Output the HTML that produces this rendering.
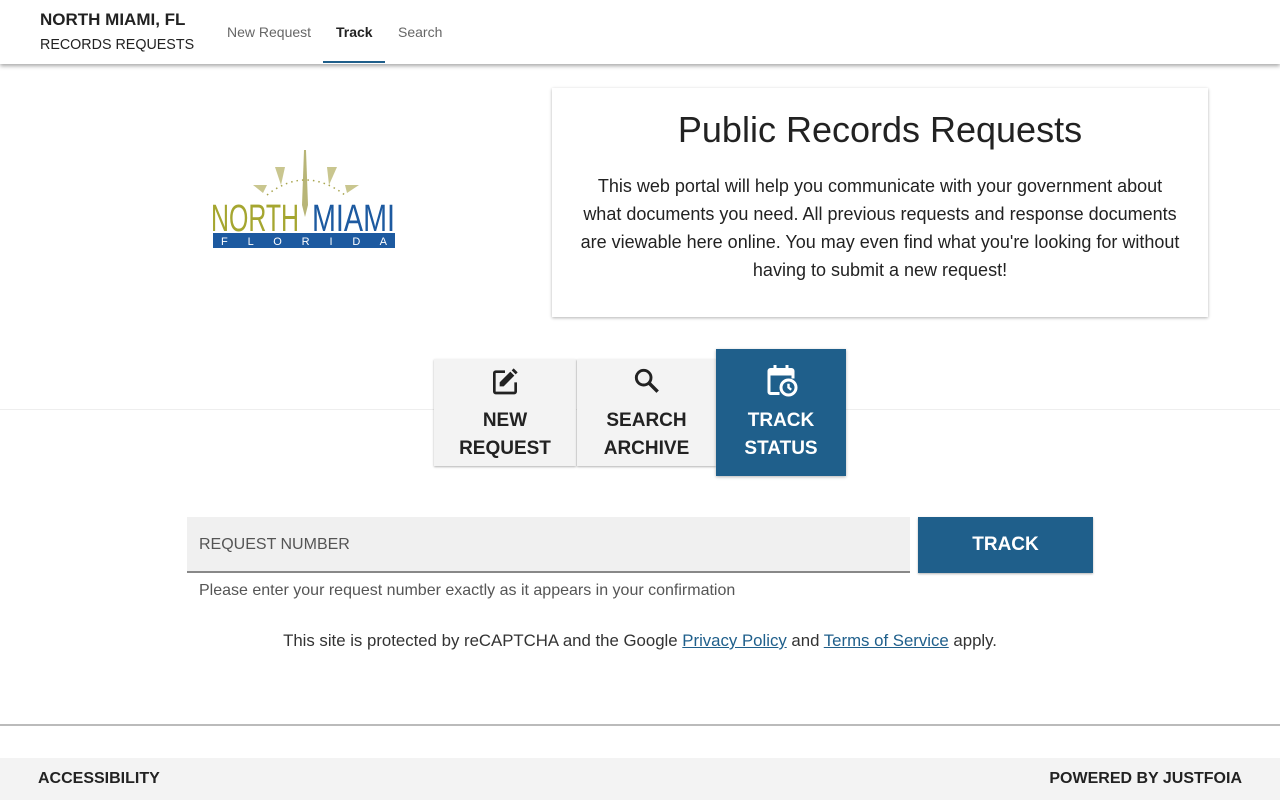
<!DOCTYPE html>
<html><head><style>
*{box-sizing:border-box;margin:0;padding:0}
body{width:1280px;height:800px;overflow:hidden;background:#fff;font-family:"Liberation Sans",Arial,sans-serif;color:#222;position:relative}
.hdr{position:absolute;left:0;top:0;width:1280px;height:64px;background:#fff;box-shadow:0 2px 4px rgba(0,0,0,.35);z-index:2}
.abs{position:absolute;white-space:nowrap}
.card{position:absolute;left:552px;top:88px;width:656px;height:229px;background:#fff;box-shadow:0 1px 3px rgba(0,0,0,.3)}
.tab{position:absolute;text-align:center;font-weight:bold;font-size:19px;line-height:28px}
a{color:#1f5f8b;text-decoration:underline}
</style></head><body>
<div class="hdr">
<div class="abs" style="left:40px;top:10px;font-size:17px;font-weight:bold">NORTH MIAMI, FL</div>
<div class="abs" style="left:40px;top:37px;font-size:14.3px">RECORDS REQUESTS</div>
<div class="abs" style="left:227px;top:24px;font-size:14px;color:#666">New Request</div>
<div class="abs" style="left:336px;top:24px;font-size:14px;font-weight:bold">Track</div>
<div class="abs" style="left:398px;top:24px;font-size:14px;color:#666">Search</div>
<div class="abs" style="left:323px;top:61px;width:62px;height:2px;background:#1f5f8b"></div>
</div>
<svg class="abs" style="left:205px;top:145px" width="200" height="110" viewBox="0 0 200 110">
<polygon points="99,5 101,5 103,60 100,72 97,60" fill="#b8b577"/>
<polygon points="70,22 80,22 76,40" fill="#c9c68f"/>
<polygon points="122,22 132,22 124,40" fill="#c9c68f"/>
<polygon points="48,40 62,40 58,48" fill="#c9c68f"/>
<polygon points="140,40 154,40 142,48" fill="#c9c68f"/>
<path d="M62,50 Q100,20 140,50" fill="none" stroke="#a8a54f" stroke-dasharray="1.5 4" stroke-width="1.5"/>
<text x="6" y="86" font-family="Liberation Sans Narrow,Liberation Sans,sans-serif" font-size="38" fill="#a5a630" textLength="88" lengthAdjust="spacingAndGlyphs">NORTH</text>
<text x="107" y="86" font-family="Liberation Sans Narrow,Liberation Sans,sans-serif" font-size="38" fill="#1d5aa0" textLength="83" lengthAdjust="spacingAndGlyphs">MIAMI</text>
<rect x="8" y="88" width="182" height="15" fill="#1d5aa0"/>
<text x="16" y="100" font-size="11" fill="#fff" textLength="166" lengthAdjust="spacing">F L O R I D A</text>
</svg>
<div class="card">
<div class="abs" style="left:0;width:656px;top:21px;text-align:center;font-size:36px;white-space:normal">Public Records Requests</div>
<div class="abs" style="left:0;width:656px;top:84px;text-align:center;font-size:18px;line-height:28px">This web portal will help you communicate with your government about<br>what documents you need. All previous requests and response documents<br>are viewable here online. You may even find what you're looking for without<br>having to submit a new request!</div>
</div>
<div class="abs" style="left:0;top:409px;width:1280px;height:1px;background:#eee"></div>
<div class="tab" style="left:434px;top:359px;width:142px;height:107px;background:#f3f3f3;box-shadow:0 1px 2px rgba(0,0,0,.3)">
<svg style="margin-top:6px;display:block;margin-left:auto;margin-right:auto" width="32" height="32" viewBox="0 0 24 24"><path d="M19 20H5V6h7V4H5a2 2 0 0 0-2 2v14a2 2 0 0 0 2 2h14a2 2 0 0 0 2-2v-7h-2z" fill="#222"/><path d="M8 16v-3l8-8 3 3-8 8zM17 4l1.5-1.5 3 3L20 7z" fill="#222"/></svg>
<div style="margin-top:10px">NEW<br>REQUEST</div></div>
<div class="tab" style="left:577px;top:359px;width:139px;height:107px;background:#f3f3f3;box-shadow:0 1px 2px rgba(0,0,0,.3)">
<svg style="margin-top:6px;display:block;margin-left:auto;margin-right:auto" width="32" height="32" viewBox="0 0 24 24"><circle cx="9.5" cy="9.5" r="5.5" fill="none" stroke="#222" stroke-width="2.2"/><path d="M13.5 13.5L20 20" stroke="#222" stroke-width="2.6"/></svg>
<div style="margin-top:10px">SEARCH<br>ARCHIVE</div></div>
<div class="tab" style="left:716px;top:349px;width:130px;height:127px;background:#1f5f8b;color:#fff;box-shadow:0 1px 3px rgba(0,0,0,.3)">
<svg style="margin-top:13px;display:block;margin-left:auto;margin-right:auto" width="36" height="36" viewBox="0 0 24 24"><path d="M7 2v2H5a2 2 0 0 0-2 2v14a2 2 0 0 0 2 2h6v-2H5V9h14v2h2V6a2 2 0 0 0-2-2h-2V2h-2v2H9V2z" fill="#fff"/><circle cx="17" cy="17" r="5" fill="none" stroke="#fff" stroke-width="2"/><path d="M17 14.5V17l1.8 1.5" stroke="#fff" stroke-width="1.6" fill="none"/></svg>
<div style="margin-top:9px">TRACK<br>STATUS</div></div>
<div class="abs" style="left:187px;top:517px;width:723px;height:56px;background:#f0f0f0;border-bottom:2px solid #888"></div>
<div class="abs" style="left:199px;top:536px;font-size:16px;color:#555">REQUEST NUMBER</div>
<div class="abs" style="left:918px;top:517px;width:175px;height:56px;background:#1f5f8b;color:#fff;font-weight:bold;font-size:19px;text-align:center;line-height:56px;box-shadow:0 1px 2px rgba(0,0,0,.3)">TRACK</div>
<div class="abs" style="left:199px;top:582px;font-size:16px;color:#555">Please enter your request number exactly as it appears in your confirmation</div>
<div class="abs" style="left:0;width:1280px;top:631px;text-align:center;font-size:16.8px;color:#333">This site is protected by reCAPTCHA and the Google <a>Privacy Policy</a> and <a>Terms of Service</a> apply.</div>
<div class="abs" style="left:0;top:724px;width:1280px;height:2px;background:#bbb"></div>
<div class="abs" style="left:0;top:758px;width:1280px;height:42px;background:#f3f3f3"></div>
<div class="abs" style="left:38px;top:770px;font-size:16px;font-weight:bold">ACCESSIBILITY</div>
<div class="abs" style="right:38px;top:770px;font-size:16px;font-weight:bold">POWERED BY JUSTFOIA</div>
</body></html>
